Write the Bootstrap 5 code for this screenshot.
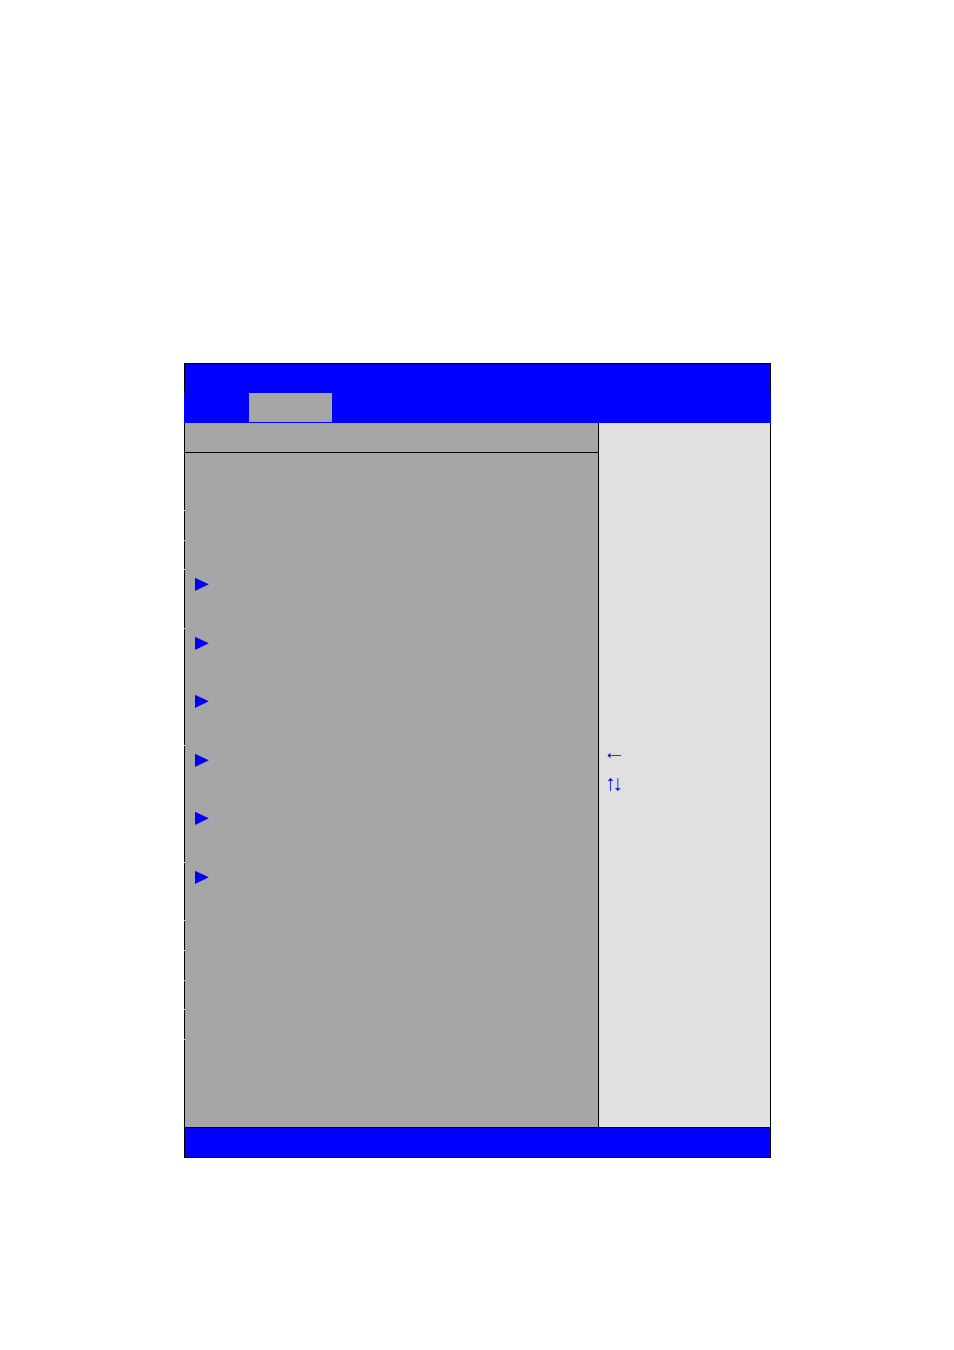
<!DOCTYPE html>
<html lang="en">
<head>
<meta charset="utf-8">
<meta name="viewport" content="width=device-width, initial-scale=1">
<title>Setup Utility</title>
<link href="https://cdn.jsdelivr.net/npm/bootstrap@5.3.0/dist/css/bootstrap.min.css" rel="stylesheet">
<style>
  body { background: #fff; color: #00f; font-family: "Liberation Serif", serif; font-size: 15px; line-height: 29px; }
  .setup-page { padding: 363px 183px 192px 184px; }
  .title-strip { height: 30px; background: #00f; border: 1px solid #000; border-bottom: 0; }
  .tab-strip { height: 30px; background: #00f; border-bottom: 1px solid #00f; padding-left: 65px; }
  .tab-current { width: 83px; background: #a6a6a6; }
  .setup-main { background: linear-gradient(to right, #d0d0d0 1px, #a6a6a6 1px); }
  .main-head { height: 30px; border-left: 1px solid #000; border-bottom: 1px solid #000; }
  .main-rows { display: grid; row-gap: 1px; }
  .row-group { min-height: 29px; border-left: 1px solid #000; padding-left: 10px; }
  .row-short { min-height: 28px; }
  .row-first { min-height: 57px; }
  .row-last { min-height: 87px; }
  .menu-entry { height: 58px; }
  .menu-entry-end { height: 57px; }
  .glyph { display: block; width: 14px; height: 28px; fill: #00f; }
  .setup-help { width: 173px; background: #e0e0e0; border: solid #000; border-width: 0 1px; padding: 318px 8px 0; }
  .help-key { display: block; width: 16px; height: 29px; fill: #00f; stroke: #00f; }
  .setup-foot { height: 31px; background: #00f; border: 1px solid #000; }
</style>
</head>
<body>
<svg class="d-none" aria-hidden="true">
  <symbol id="submenu" viewBox="0 0 14 28"><path d="M0 7.7L13.8 14.3L0 21z"/></symbol>
</svg>
<div class="setup-page">
  <header>
    <div class="title-strip"></div>
    <nav class="tab-strip d-flex" aria-label="Setup pages"><div class="tab-current"></div></nav>
  </header>
  <div class="d-flex">
    <main class="setup-main flex-grow-1">
      <div class="main-head"></div>
      <div class="main-rows">
        <div class="row-group row-first"></div>
        <div class="row-group"></div>
        <div class="row-group row-short"></div>
        <div class="row-group">
          <div class="menu-entry"><svg class="glyph"><use href="#submenu"/></svg></div>
        </div>
        <div class="row-group">
          <div class="menu-entry"><svg class="glyph"><use href="#submenu"/></svg></div>
          <div class="menu-entry"><svg class="glyph"><use href="#submenu"/></svg></div>
        </div>
        <div class="row-group">
          <div class="menu-entry"><svg class="glyph"><use href="#submenu"/></svg></div>
          <div class="menu-entry"><svg class="glyph"><use href="#submenu"/></svg></div>
        </div>
        <div class="row-group">
          <div class="menu-entry-end"><svg class="glyph"><use href="#submenu"/></svg></div>
        </div>
        <div class="row-group"></div>
        <div class="row-group"></div>
        <div class="row-group row-short"></div>
        <div class="row-group"></div>
        <div class="row-group row-last"></div>
      </div>
    </main>
    <aside class="setup-help flex-shrink-0">
      <svg class="help-key" viewBox="0 0 16 29" role="img" aria-label="Left arrow key">
        <path d="M2 14.5H14" fill="none" stroke-width=".8"/>
        <path d="M.8 14.5L3.3 12.2L2.8 14.5L3.3 16.8z" stroke-width=".5"/>
      </svg>
      <svg class="help-key" viewBox="0 0 16 29" role="img" aria-label="Up and down arrow keys">
        <path d="M3.5 9V21M10.8 8V20" fill="none" stroke-width=".8"/>
        <path d="M3.5 8.2L5.8 10.8L3.5 10.2L1.2 10.8zM10.8 20.8L13.1 18.2L10.8 18.8L8.5 18.2z" stroke-width=".5"/>
      </svg>
    </aside>
  </div>
  <footer class="setup-foot"></footer>
</div>
<script src="https://cdn.jsdelivr.net/npm/bootstrap@5.3.0/dist/js/bootstrap.bundle.min.js"></script>
</body>
</html>
